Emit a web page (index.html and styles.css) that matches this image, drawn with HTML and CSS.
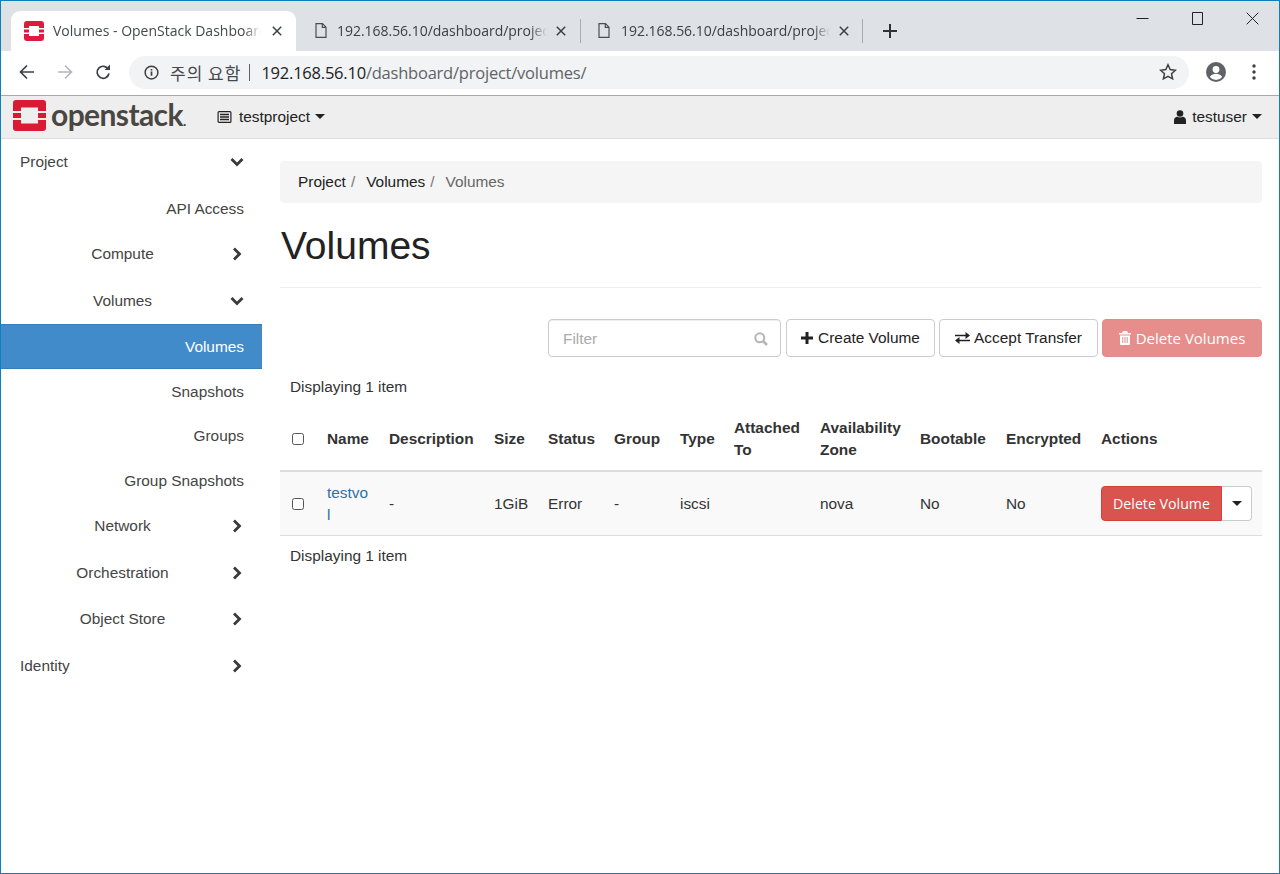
FILE: index.html
```html
<!DOCTYPE html>
<html lang="en">
<head>
<meta charset="utf-8">
<title>Volumes - OpenStack Dashboard</title>
<link rel="stylesheet" href="styles.css">
</head>
<body>
<div class="window">
  <div class="tabstrip">
    <div class="tab tab-active">
      <svg class="favicon" viewBox="0 0 20 20"><path fill="#e0193f" fill-rule="evenodd" d="M3 0h14a3 3 0 0 1 3 3v4h-5V5H5v2H0V3a3 3 0 0 1 3-3zM0 8.500h5v3H0zM15 8.500h5v3h-5zM0 13h5v2h10v-2h5v4a3 3 0 0 1-3 3H3a3 3 0 0 1-3-3z"/></svg>
      <span class="tab-title">Volumes - OpenStack Dashboard</span>
      <svg class="tab-close" viewBox="0 0 10 10"><path d="M.8.8l8.400 8.400M9.200.8L.8 9.200" stroke="#3c4043" stroke-width="1.500" fill="none"/></svg>
    </div>
    <div class="tab tab-b">
      <svg class="page-icon" viewBox="0 0 12 15"><path d="M1 .7h6.500L11 4.200v10.100H1zM7.300.7v3.700H11" fill="none" stroke="#4a4d51" stroke-width="1.200"/></svg>
      <span class="tab-title">192.168.56.10/dashboard/project/volumes</span>
      <svg class="tab-close" viewBox="0 0 10 10"><path d="M.8.8l8.400 8.400M9.200.8L.8 9.200" stroke="#3c4043" stroke-width="1.500" fill="none"/></svg>
    </div>
    <div class="tab-sep"></div>
    <div class="tab tab-c">
      <svg class="page-icon" viewBox="0 0 12 15"><path d="M1 .7h6.500L11 4.200v10.100H1zM7.300.7v3.700H11" fill="none" stroke="#4a4d51" stroke-width="1.200"/></svg>
      <span class="tab-title">192.168.56.10/dashboard/project/volumes</span>
      <svg class="tab-close" viewBox="0 0 10 10"><path d="M.8.8l8.400 8.400M9.200.8L.8 9.200" stroke="#3c4043" stroke-width="1.500" fill="none"/></svg>
    </div>
    <div class="tab-sep tab-sep-last"></div>
    <svg class="new-tab" viewBox="0 0 14 14"><path d="M7 0v14M0 7h14" stroke="#2f3236" stroke-width="2" fill="none"/></svg>
    <div class="win-controls">
      <svg class="win-icon" viewBox="0 0 13 13"><path d="M.5 6.500h12" stroke="#222" fill="none"/></svg>
      <svg class="win-icon" viewBox="0 0 13 13"><path d="M1.500 .5h10v12h-10z" stroke="#222" fill="none"/></svg>
      <svg class="win-icon" viewBox="0 0 13 13"><path d="M.7.700l11.600 11.600M12.300.7L.7 12.300" stroke="#222" fill="none"/></svg>
    </div>
  </div>

  <div class="toolbar">
    <svg class="tool-icon" viewBox="0 0 16 16"><path d="M15 8H2M8 1.500L1.500 8 8 14.500" stroke="#3c4043" stroke-width="1.700" fill="none"/></svg>
    <svg class="tool-icon" viewBox="0 0 16 16"><path d="M1 8h13M8 1.500L14.500 8 8 14.500" stroke="#b4b7bb" stroke-width="1.700" fill="none"/></svg>
    <svg class="tool-icon" viewBox="0 0 16 16"><path d="M13.300 5.200A6 6 0 1 0 14 9.500" stroke="#3c4043" stroke-width="1.700" fill="none"/><path d="M9.500 6H15V.5z" fill="#3c4043"/></svg>
    <div class="omnibox">
      <svg class="info-icon" viewBox="0 0 16 16"><circle cx="8" cy="8" r="6.800" fill="none" stroke="#3c4043" stroke-width="1.600"/><path d="M8 7v4.500M8 4.200v1.600" stroke="#3c4043" stroke-width="1.800"/></svg>
      <span class="warn">주의 요함</span>
      <span class="omni-sep"></span>
      <span class="url"><span class="url-host">192.168.56.10</span>/dashboard/project/volumes/</span>
      <svg class="star" viewBox="0 0 18 18"><path d="M9 1.800l2.200 4.800 5.200.6-3.900 3.500 1.100 5.200L9 13.300l-4.600 2.600 1.100-5.200L1.600 7.200l5.200-.6z" fill="none" stroke="#3c4043" stroke-width="1.500"/></svg>
    </div>
    <svg class="avatar" viewBox="0 0 20 20"><circle cx="10" cy="10" r="10" fill="#5f6368"/><circle cx="10" cy="7.500" r="3.400" fill="#fff"/><path d="M3.800 15c1.500-2.500 4-3.200 6.200-3.200s4.700.7 6.200 3.200a8 8 0 0 1-12.400 0z" fill="#fff"/></svg>
    <svg class="dots" viewBox="0 0 4 16"><circle cx="2" cy="2" r="1.700" fill="#3c4043"/><circle cx="2" cy="8" r="1.700" fill="#3c4043"/><circle cx="2" cy="14" r="1.700" fill="#3c4043"/></svg>
  </div>

  <header class="navbar">
    <div class="brand">
      <svg class="logo" viewBox="0 0 33 31"><path fill="#da1a32" d="M3 0h27a3 3 0 0 1 3 3v8h-8V7.500H8V11H0V3a3 3 0 0 1 3-3zM0 13h8v5H0zM25 13h8v5h-8zM0 20h8v3.500h17V20h8v8a3 3 0 0 1-3 3H3a3 3 0 0 1-3-3z"/></svg>
      <span class="brand-name">openstack<span class="brand-dot">.</span></span>
    </div>
    <div class="project-pick">
      <svg class="tasks" viewBox="0 0 14 12"><rect x=".6" y=".6" width="12.800" height="10.800" rx="1" fill="none" stroke="#222" stroke-width="1.200"/><path d="M2.500 3.500h9M2.500 6h9M2.500 8.500h9" stroke="#222" stroke-width="1.300"/></svg>
      <span>testproject</span><i class="caret"></i>
    </div>
    <div class="user-pick">
      <svg class="user" viewBox="0 0 12 14"><circle cx="6" cy="3.500" r="3.300" fill="#222"/><path d="M0 14v-3.500C0 8 1.800 6.800 3.300 6.800c1 .8 4.400.8 5.400 0C10.200 6.800 12 8 12 10.500V14z" fill="#222"/></svg>
      <span>testuser</span><i class="caret"></i>
    </div>
  </header>

  <div class="page">
    <nav class="sidebar">
      <div class="nav-item nav-top nav-first"><span class="nav-label">Project</span><svg class="chev" viewBox="0 0 14 14"><path d="M1.500 4l5.500 5.500L12.500 4" fill="none" stroke="#3a3a3a" stroke-width="2.800"/></svg></div>
      <div class="nav-item nav-leaf">API Access</div>
      <div class="nav-item nav-mid"><span class="nav-label">Compute</span><svg class="chev" viewBox="0 0 14 14"><path d="M4 1.500L9.500 7 4 12.500" fill="none" stroke="#3a3a3a" stroke-width="2.800"/></svg></div>
      <div class="nav-item nav-mid"><span class="nav-label">Volumes</span><svg class="chev" viewBox="0 0 14 14"><path d="M1.500 4l5.500 5.500L12.500 4" fill="none" stroke="#3a3a3a" stroke-width="2.800"/></svg></div>
      <div class="nav-sub nav-active">Volumes</div>
      <div class="nav-sub">Snapshots</div>
      <div class="nav-sub">Groups</div>
      <div class="nav-sub">Group Snapshots</div>
      <div class="nav-item nav-mid"><span class="nav-label">Network</span><svg class="chev" viewBox="0 0 14 14"><path d="M4 1.500L9.500 7 4 12.500" fill="none" stroke="#3a3a3a" stroke-width="2.800"/></svg></div>
      <div class="nav-item nav-mid"><span class="nav-label">Orchestration</span><svg class="chev" viewBox="0 0 14 14"><path d="M4 1.500L9.500 7 4 12.500" fill="none" stroke="#3a3a3a" stroke-width="2.800"/></svg></div>
      <div class="nav-item nav-mid"><span class="nav-label">Object Store</span><svg class="chev" viewBox="0 0 14 14"><path d="M4 1.500L9.500 7 4 12.500" fill="none" stroke="#3a3a3a" stroke-width="2.800"/></svg></div>
      <div class="nav-item nav-top"><span class="nav-label">Identity</span><svg class="chev" viewBox="0 0 14 14"><path d="M4 1.500L9.500 7 4 12.500" fill="none" stroke="#3a3a3a" stroke-width="2.800"/></svg></div>
    </nav>

    <main class="content">
      <ol class="breadcrumb">
        <li>Project</li><li class="crumb-sep">/</li>
        <li>Volumes</li><li class="crumb-sep">/</li>
        <li class="crumb-current">Volumes</li>
      </ol>
      <h1 class="page-title">Volumes</h1>
      <div class="actions">
        <div class="filter">
          <span class="filter-text">Filter</span>
          <svg class="filter-icon" viewBox="0 0 14 14"><circle cx="5.800" cy="5.800" r="4.500" fill="none" stroke="#b5b5b5" stroke-width="2"/><path d="M9 9l4 4" stroke="#b5b5b5" stroke-width="2.500"/></svg>
        </div>
        <button class="btn btn-create"><svg class="btn-icon" viewBox="0 0 12 12"><path d="M6 0v12M0 6h12" stroke="#222" stroke-width="3"/></svg>Create Volume</button>
        <button class="btn btn-accept"><svg class="btn-icon btn-icon-wide" viewBox="0 0 15 12"><path d="M0 3.500h11M15 8.500H4" stroke="#222" stroke-width="1.700"/><path d="M10.500 0L15 3.500 10.500 7zM4.500 5L0 8.500 4.500 12z" fill="#222"/></svg>Accept Transfer</button>
        <button class="btn btn-delete-all"><svg class="btn-icon" viewBox="0 0 12 14"><path fill="#fff" fill-rule="evenodd" d="M4 0h4l1 2h3v1.500H0V2h3zM1 4.500h10V13a1 1 0 0 1-1 1H2a1 1 0 0 1-1-1zM3.300 6v6h1V6zM5.500 6v6h1V6zM7.700 6v6h1V6z"/></svg>Delete Volumes</button>
      </div>
      <p class="summary summary-top">Displaying 1 item</p>
      <table class="volumes">
        <colgroup>
          <col class="c-check"><col class="c-name"><col class="c-desc"><col class="c-size"><col class="c-status"><col class="c-group"><col class="c-type"><col class="c-att"><col class="c-zone"><col class="c-boot"><col class="c-enc"><col class="c-act">
        </colgroup>
        <thead>
          <tr>
            <th><i class="check"></i></th><th>Name</th><th>Description</th><th>Size</th><th>Status</th><th>Group</th><th>Type</th><th>Attached To</th><th>Availability Zone</th><th>Bootable</th><th>Encrypted</th><th>Actions</th>
          </tr>
        </thead>
        <tbody>
          <tr>
            <td><i class="check"></i></td>
            <td class="name-cell"><a class="vol-link">testvol</a></td>
            <td>-</td><td>1GiB</td><td>Error</td><td>-</td><td>iscsi</td><td></td><td>nova</td><td>No</td><td>No</td>
            <td><div class="row-actions"><span class="row-del">Delete Volume</span><span class="row-more"><i class="caret"></i></span></div></td>
          </tr>
        </tbody>
      </table>
      <p class="summary summary-bottom">Displaying 1 item</p>
    </main>
  </div>
</div>
</body>
</html>
```

FILE: styles.css
```css
* { box-sizing: border-box; }
html, body { margin: 0; height: 100%; }
body { font-family: "Liberation Sans", Arial, sans-serif; font-size: 15.400px; color: #333; background: #fff; }

.window { width: 1280px; height: 874px; border: 1px solid #0f7fbc; display: flex; flex-direction: column; overflow: hidden; }

/* browser tab strip */
.tabstrip { height: 50px; flex: none; background: #dee1e6; display: flex; align-items: flex-end; padding-left: 10px; }
.tab { width: 285px; height: 40px; flex: none; display: flex; align-items: center; padding-bottom: 1px; font-family: "Open Sans", sans-serif; font-size: 14px; color: #3c4043; border-radius: 9px 9px 0 0; }
.tab-active { background: #fff; color: #45484c; }
.favicon { width: 20px; height: 20px; margin-left: 13px; margin-right: 9px; flex: none; }
.page-icon { width: 12px; height: 15px; flex: none; }
.tab-b { width: 284px; }
.tab-b .page-icon { margin: 0 10px 0 19px; }
.tab-c { width: 282px; }
.tab-c .page-icon { margin: 0 11px 0 17px; }
.tab-title { flex: 1; white-space: nowrap; overflow: hidden; min-width: 0; -webkit-mask-image: linear-gradient(90deg, #000 92%, transparent 100%); mask-image: linear-gradient(90deg, #000 92%, transparent 100%); }
.tab-close { width: 10px; height: 10px; margin: 0 14px 0 11px; flex: none; }
.tab-b .tab-close, .tab-c .tab-close { margin-left: 9px; }
.tab-b .tab-title, .tab-c .tab-title { letter-spacing: -.03px; }
.tab-sep { width: 1px; height: 24px; background: #a9acb0; margin: 0 0 8px 0; flex: none; }
.tab-sep-last { margin-left: -1px; }
.new-tab { width: 14px; height: 14px; margin: 0 0 13px 20px; flex: none; }
.win-controls { margin-left: auto; align-self: flex-start; display: flex; gap: 42px; padding: 11px 20px 0 0; }
.win-icon { width: 13px; height: 13px; display: block; }

/* browser toolbar */
.toolbar { height: 44px; flex: none; background: #fff; display: flex; align-items: center; padding: 0 0 2px 18px; }
.tool-icon { width: 16px; height: 16px; margin-right: 22px; flex: none; }
.toolbar .tool-icon:nth-child(3) { margin-right: 18px; }
.omnibox { width: 1060px; height: 33px; border-radius: 17px; background: #f1f3f4; display: flex; align-items: center; padding: 0 12px 0 15px; margin-right: 17px; flex: none; }
.info-icon { width: 15px; height: 15px; flex: none; margin-right: 11px; }
.warn { font-family: "Noto Sans CJK KR", sans-serif; font-size: 17px; color: #45484c; letter-spacing: 1px; }
.omni-sep { width: 1px; height: 17px; background: #5f6368; margin: 0 11px 0 8px; }
.url { font-family: "Open Sans", sans-serif; font-size: 16.500px; color: #5f6368; letter-spacing: -.22px; }
.url-host { color: #202124; }
.star { width: 18px; height: 18px; margin-left: auto; }
.avatar { width: 20px; height: 20px; flex: none; margin-right: 26px; }
.dots { width: 4px; height: 16px; flex: none; }

/* dashboard navbar */
.navbar { height: 44px; flex: none; background: #eee; border-top: 1px solid #a8a8a8; border-bottom: 1px solid #ddd; display: flex; align-items: center; padding: 0 0 1px 12px; color: #222; }
.brand { display: flex; align-items: center; width: 204px; flex: none; margin-top: -2px; }
.logo { width: 33px; height: 31px; flex: none; }
.brand-name { font-family: "Lato", sans-serif; font-size: 30px; font-weight: 700; color: #4a4642; margin-left: 5px; padding-bottom: 3px; letter-spacing: -.6px; line-height: 1; }
.brand-dot { font-size: 14px; }
.project-pick { display: flex; align-items: center; }
.tasks { width: 15px; height: 12px; margin-right: 7px; }
.caret { display: inline-block; width: 0; height: 0; border-top: 5px solid #222; border-left: 5px solid transparent; border-right: 5px solid transparent; margin-left: 5px; }
.user-pick { margin-left: auto; display: flex; align-items: center; padding-right: 17px; }
.user { width: 12px; height: 14px; margin-right: 6px; }

/* side navigation */
.page { flex: 1; display: flex; min-height: 0; }
.sidebar { width: 261px; flex: none; color: #444; }
.nav-item { height: 46.500px; display: grid; align-items: center; padding-right: 18px; }
.nav-item > * { grid-area: 1 / 1; }
.nav-first { height: 46px; }
.nav-top .nav-label { padding-left: 19px; }
.nav-mid .nav-label { text-align: center; }
.nav-leaf { display: block; height: 46px; text-align: right; padding-top: 13px; line-height: 22px; }
.chev { width: 14px; height: 14px; justify-self: end; }
.nav-sub { height: 44.500px; display: flex; align-items: center; justify-content: flex-end; padding-right: 18px; }
.nav-active { height: 45px; margin-bottom: .5px; background: #428bca; border-top: 1px solid #357ebd; border-bottom: 1px solid #357ebd; color: #fff; }

/* main content */
.content { flex: 1; padding: 22px 17px 0 18px; min-width: 0; color: #333; }
.breadcrumb { list-style: none; margin: 0; padding: 0 18px; height: 42px; background: #f5f5f5; border-radius: 4px; display: flex; align-items: center; color: #222; }
.crumb-sep { color: #777; margin: 0 11px 0 5px; }
.crumb-current { color: #666; }
.page-title { margin: 0; padding: 21px 0 20px 1px; height: 85px; font-size: 39px; font-weight: 400; line-height: 43px; color: #222; border-bottom: 1px solid #eee; }
.actions { display: flex; justify-content: flex-end; gap: 4px; margin-top: 31px; height: 38px; }
.filter { width: 233px; height: 38px; border: 1px solid #ccc; border-radius: 4px; display: flex; align-items: center; justify-content: space-between; padding: 2px 12px 0 14px; box-shadow: inset 0 1px 1px rgba(0,0,0,.07); margin-right: 1px; }
.filter-text { color: #aaa; }
.filter-icon { width: 14px; height: 14px; }
.btn { height: 38px; border: 1px solid #ccc; border-radius: 4px; background: #fff; font: inherit; color: #222; padding: 0; display: flex; align-items: center; justify-content: center; }
.btn-create { width: 149px; }
.btn-accept { width: 159px; }
.btn-delete-all { width: 160px; background: #e58e8c; border-color: #dd8d8b; color: #fff; font-family: "Open Sans", sans-serif; font-size: 15px; }
.btn-icon { width: 12px; height: 12px; margin-right: 5px; }
.btn-icon-wide { width: 15px; margin-right: 4px; }
.btn-delete-all .btn-icon { height: 14px; }
.summary { margin: 0; line-height: 22px; padding-left: 10px; color: #333; }
.summary-top { margin-top: 19px; }
.summary-bottom { margin-top: 9px; }

.volumes { width: 982px; table-layout: fixed; border-collapse: collapse; margin-top: 13px; }
.c-check { width: 37px; } .c-name { width: 62px; } .c-desc { width: 105px; } .c-size { width: 54px; }
.c-status { width: 66px; } .c-group { width: 66px; } .c-type { width: 54px; } .c-att { width: 86px; }
.c-zone { width: 100px; } .c-boot { width: 86px; } .c-enc { width: 95px; } .c-act { width: 171px; }
.volumes th { text-align: left; padding: 4px 10px 8px; height: 60px; font-weight: 700; line-height: 22px; color: #333; border-bottom: 2px solid #ddd; vertical-align: middle; }
.volumes td { padding: 9.500px 10px; height: 63px; line-height: 22px; background: #f9f9f9; border-bottom: 1px solid #ddd; vertical-align: middle; }
.volumes th:first-child { padding: 0 0 4px 12px; }
.volumes td:first-child { padding: 0 0 0 12px; }
.check { display: block; width: 12px; height: 12px; border: 1.500px solid #555; border-radius: 2.500px; background: #fff; }
.name-cell { word-break: break-all; }
.vol-link { color: #2f6fa8; }
.row-actions { display: flex; height: 35px; }
.row-del { width: 121px; background: #d9534f; border: 1px solid #d43f3a; border-radius: 4px 0 0 4px; color: #fff; font-family: "Open Sans", sans-serif; font-size: 14.200px; display: flex; align-items: center; justify-content: center; }
.row-more { width: 30px; background: #fff; border: 1px solid #ccc; border-left: 0; border-radius: 0 4px 4px 0; display: flex; align-items: center; justify-content: center; }
.row-more .caret { margin: 0; }
```
